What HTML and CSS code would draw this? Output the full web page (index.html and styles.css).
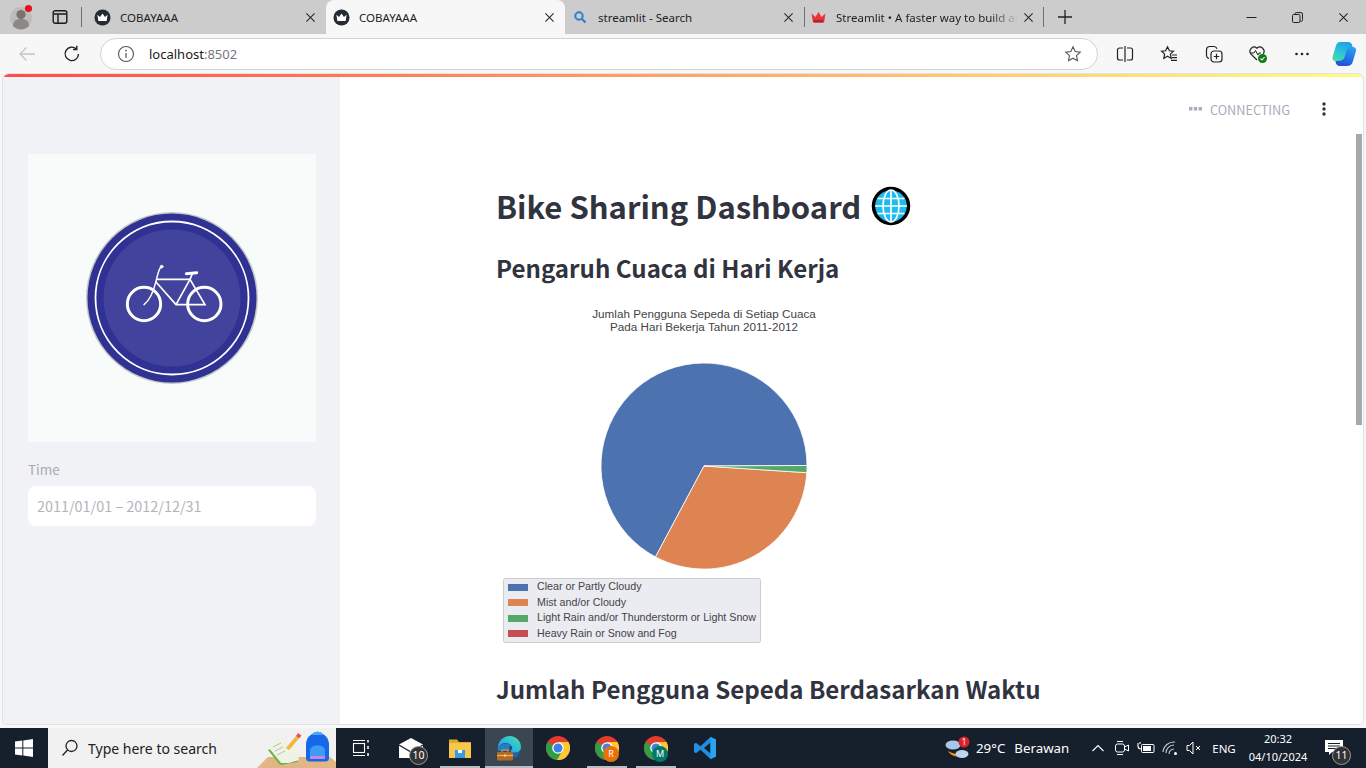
FILE: index.html
```html
<!DOCTYPE html>
<html lang="en">
<head>
<meta charset="utf-8">
<title>COBAYAAA</title>
<link rel="stylesheet" href="styles.css">
</head>
<body>
<svg class="defs" width="0" height="0" aria-hidden="true">
  <symbol id="crown" viewBox="0 0 18 18">
    <circle cx="9" cy="9" r="8.500" fill="#262a36"/>
    <path d="M3.600 6.200 6.400 8.400 9 4.800l2.600 3.600 2.800-2.200-1 6.400H4.600z" fill="#fff"/>
  </symbol>
  <symbol id="chrome" viewBox="0 0 24 24">
    <circle cx="12" cy="12" r="12" fill="#e33b2e"/>
    <path d="M12 12 1.600 6A12 12 0 0 0 11 24l7-10z" fill="#2f9e44"/>
    <path d="M12 6h10.400A12 12 0 0 1 11 24l7-12z" fill="#fcc934"/>
    <circle cx="12" cy="12" r="5.800" fill="#fff"/>
    <circle cx="12" cy="12" r="4.500" fill="#3b82e6"/>
  </symbol>
  <symbol id="close" viewBox="0 0 12 12">
    <path d="M1.500 1.500l9 9M10.500 1.500l-9 9" stroke="#222" stroke-width="1.100" fill="none"/>
  </symbol>
</svg>

<div class="tabstrip">
  <div class="profile">
    <svg width="26" height="26" viewBox="0 0 26 26">
      <circle cx="12" cy="14" r="11" fill="#bdbcb9"/>
      <circle cx="12" cy="10.500" r="4.600" fill="#77746f"/>
      <path d="M4 22c0-6 4-7 8-7s8 1 8 7a11 11 0 0 1-16 0z" fill="#8c8985"/>
      <circle cx="19.500" cy="4.500" r="3.600" fill="#e81123"/>
    </svg>
  </div>
  <div class="side-btn">
    <svg width="16" height="16" viewBox="0 0 16 16"><rect x="1.200" y="1.700" width="13.600" height="12.600" rx="2" fill="none" stroke="#1a1a1a" stroke-width="1.400"/><path d="M2 5h12M6 5v9" stroke="#1a1a1a" stroke-width="1.400" fill="none"/></svg>
  </div>
  <span class="sep first"></span>
  <div class="tab">
    <svg class="fav" width="17" height="17"><use href="#crown"/></svg>
    <span class="tab-title">COBAYAAA</span>
    <svg class="x" width="11" height="11"><use href="#close"/></svg>
  </div>
  <div class="tab active">
    <svg class="fav" width="17" height="17"><use href="#crown"/></svg>
    <span class="tab-title">COBAYAAA</span>
    <svg class="x" width="11" height="11"><use href="#close"/></svg>
  </div>
  <div class="tab">
    <svg class="fav" width="17" height="17" viewBox="0 0 17 17"><circle cx="7" cy="7" r="3.700" fill="none" stroke="#2f7fd1" stroke-width="2"/><path d="M10 10l3.500 3.500" stroke="#2f7fd1" stroke-width="2.200"/></svg>
    <span class="tab-title">streamlit - Search</span>
    <svg class="x" width="11" height="11"><use href="#close"/></svg>
  </div>
  <span class="sep"></span>
  <div class="tab narrow">
    <svg class="fav" width="17" height="17" viewBox="0 0 17 17"><path d="M1.500 4.500 5.500 8 8.500 3l3 5 4-3.500-1.500 9H3z" fill="#e8323c"/><path d="M3.500 11h10l-.5 2.500H4z" fill="#b2212c"/></svg>
    <span class="tab-title fade">Streamlit • A faster way to build an</span>
    <svg class="x" width="11" height="11"><use href="#close"/></svg>
  </div>
  <span class="sep"></span>
  <div class="new-tab">
    <svg width="16" height="16" viewBox="0 0 16 16"><path d="M8 1v14M1 8h14" stroke="#222" stroke-width="1.300"/></svg>
  </div>
  <div class="spacer"></div>
  <div class="win"><svg width="11" height="11" viewBox="0 0 11 11"><path d="M.5 5.500h10" stroke="#222"/></svg></div>
  <div class="win"><svg width="11" height="11" viewBox="0 0 11 11"><rect x=".5" y="2.500" width="7.500" height="8" rx="1.200" fill="none" stroke="#222"/><path d="M3 2.500V1.800A1.200 1.200 0 0 1 4.200.6H9a1.500 1.500 0 0 1 1.500 1.500V7.500A1.200 1.200 0 0 1 8 8.500" fill="none" stroke="#222"/></svg></div>
  <div class="win"><svg width="11" height="11"><use href="#close"/></svg></div>
</div>

<div class="toolbar">
  <div class="tool first">
    <svg width="18" height="18" viewBox="0 0 18 18"><path d="M17 9H2M8.500 2.500 2 9l6.500 6.500" fill="none" stroke="#c4c4c4" stroke-width="1.300"/></svg>
  </div>
  <div class="tool back-gap">
    <svg width="18" height="18" viewBox="0 0 18 18"><path d="M15.500 9A6.700 6.700 0 1 1 13.300 3.900" fill="none" stroke="#222" stroke-width="1.400"/><path d="M13.800 .8v3.700h-3.700" fill="none" stroke="#222" stroke-width="1.400"/></svg>
  </div>
  <div class="address">
    <svg class="info" width="18" height="18" viewBox="0 0 18 18"><circle cx="9" cy="9" r="7.500" fill="none" stroke="#555" stroke-width="1.100"/><path d="M9 8v5" stroke="#555" stroke-width="1.200"/><circle cx="9" cy="5.600" r=".9" fill="#555"/></svg>
    <span class="url">localhost<span class="port">:8502</span></span>
    <div class="spacer"></div>
    <svg class="star" width="18" height="18" viewBox="0 0 18 18"><path d="M9 1.800l2.200 4.700 5.100.6-3.800 3.500 1 5.100L9 13.200l-4.500 2.500 1-5.100L1.700 7.100l5.100-.6z" fill="none" stroke="#555" stroke-width="1.100"/></svg>
  </div>
  <div class="tools-right">
    <div class="tool wide"><svg width="18" height="18" viewBox="0 0 18 18"><path d="M9 1v16" stroke="#222" stroke-width="1.200"/><path d="M7 3H3.500a2 2 0 0 0-2 2v8a2 2 0 0 0 2 2H7M11 3h3.500a2 2 0 0 1 2 2v8a2 2 0 0 1-2 2H11" fill="none" stroke="#222" stroke-width="1.200"/></svg></div>
    <div class="tool wide"><svg width="18" height="18" viewBox="0 0 18 18"><path d="M7.500 1.800l1.900 4 4 .5-3 2.800.8 4.300-3.700-2.100-3.700 2.100.8-4.300-3-2.800 4-.5z" fill="none" stroke="#222" stroke-width="1.200"/><path d="M12 10h5M12 12.700h5M11 15.400h6" stroke="#222" stroke-width="1.200"/></svg></div>
    <div class="tool wide"><svg width="18" height="18" viewBox="0 0 18 18"><rect x="6" y="6" width="11" height="11" rx="3" fill="none" stroke="#222" stroke-width="1.200"/><path d="M11.500 8.800v5.400M8.800 11.500h5.400" stroke="#222" stroke-width="1.200"/><path d="M4 13.500c-1.500-.6-2.500-1.500-2.500-3V5C1.500 3 3 1.500 5 1.500h4c1.500 0 2.500.8 3 2.200" fill="none" stroke="#222" stroke-width="1.200"/></svg></div>
    <div class="tool wide"><svg width="20" height="20" viewBox="0 0 20 20"><path d="M9 16 2.800 9.800A4.200 4.200 0 0 1 9 4.200a4.200 4.200 0 0 1 6.200 5.600" fill="none" stroke="#222" stroke-width="1.200"/><path d="M2.500 9h3.500l1.500-2.500L10 11l1-2h2" fill="none" stroke="#222" stroke-width="1"/><circle cx="14.500" cy="14.500" r="4.500" fill="#107c10"/><path d="M12.500 14.500l1.500 1.500 2.500-3" fill="none" stroke="#fff" stroke-width="1.100"/></svg></div>
    <div class="tool wide"><svg width="16" height="4" viewBox="0 0 16 4"><circle cx="2.500" cy="2" r="1.300" fill="#222"/><circle cx="8" cy="2" r="1.300" fill="#222"/><circle cx="13.500" cy="2" r="1.300" fill="#222"/></svg></div>
    <div class="tool last"><svg width="24" height="26" viewBox="0 0 24 26">
      <defs>
        <linearGradient id="cpa" x1="0.700" y1="0" x2="0.300" y2="1"><stop offset="0" stop-color="#1f9fe8"/><stop offset=".6" stop-color="#2fc6d6"/><stop offset="1" stop-color="#43dca0"/></linearGradient>
        <linearGradient id="cpb" x1="0.700" y1="0" x2="0.300" y2="1"><stop offset="0" stop-color="#2aa0f0"/><stop offset=".6" stop-color="#1f6fe6"/><stop offset="1" stop-color="#2a4fd0"/></linearGradient>
      </defs>
      <path d="M8 1h8c2.500 0 3.800 1.500 4.300 3.500L21 7h-1.500c-2 0-3 1-3.500 3l-2 7.500c-.6 1.800-2 2.500-4 2.500H3.500C1 20 0 18 .6 16L4 4.500C4.700 2.300 6 1 8 1z" fill="url(#cpa)"/>
      <path d="M15 25H8c-2.500 0-3.800-1.500-4.300-3.500L3.500 20H6c3.500 0 5.500-1 6.500-3.500l2-7C15 7.500 16.500 6 18.500 6H21c2.300 0 3.600 2 3 4l-3.500 11.500C19.800 23.700 18 25 15 25z" fill="url(#cpb)"/>
    </svg></div>
  </div>
</div>

<div class="window">
  <div class="app">
    <div class="decoration"></div>
    <div class="app-body">
      <aside class="sidebar">
        <div class="logo">
          <svg width="288" height="288" viewBox="0 0 288 288">
            <circle cx="144" cy="144" r="86" fill="#c4c6c8"/>
            <circle cx="144" cy="144" r="84.500" fill="#2f3193"/>
            <circle cx="144" cy="144" r="76.500" fill="none" stroke="#fff" stroke-width="1.800"/>
            <circle cx="144" cy="144" r="68.500" fill="#42439c"/>
            <g transform="translate(42 46) scale(.3333)" fill="none" stroke="#fff" stroke-linecap="round">
              <circle cx="222" cy="312" r="50" stroke-width="9"/>
              <circle cx="403" cy="312" r="50" stroke-width="9"/>
              <path d="M274 200c-8 5-10 22-16 44-7 28-18 56-36 70" stroke-width="4.500"/>
              <path d="M262 238h98M258 246l60 68h87l-45-76-42 76" stroke-width="5"/>
              <path d="M349 221l31-3" stroke-width="9"/>
              <path d="M366 224l-6 14" stroke-width="5"/>
              <circle cx="275" cy="200" r="4" fill="#fff" stroke-width="3"/>
            </g>
          </svg>
        </div>
        <label class="field-label">Time</label>
        <div class="date-input">2011/01/01 – 2012/12/31</div>
      </aside>
      <main class="main">
        <div class="status">
          <svg width="13" height="4" viewBox="0 0 13 4"><path d="M0 0h3.400v3.400H0zM4.800 0h3.400v3.400H4.800zM9.600 0H13v3.400H9.600z" fill="#a6adbb"/></svg>
          <span class="status-text">CONNECTING</span>
          <svg class="kebab" width="4" height="14" viewBox="0 0 4 14"><circle cx="2" cy="2" r="1.700" fill="#31333f"/><circle cx="2" cy="7" r="1.700" fill="#31333f"/><circle cx="2" cy="12" r="1.700" fill="#31333f"/></svg>
        </div>
        <div class="scrollbar"></div>
        <h1 class="title">Bike Sharing Dashboard
          <svg class="globe" width="40" height="40" viewBox="0 0 40 40">
            <circle cx="20" cy="20" r="17.500" fill="#1cbcf0" stroke="#000" stroke-width="3.500"/>
            <g fill="none" stroke="#fff" stroke-width="1.700">
              <ellipse cx="20" cy="20" rx="8" ry="16"/>
              <path d="M20 4v32M4 20h32M6.500 12.500h27M6.500 27.500h27"/>
            </g>
          </svg>
        </h1>
        <h2 class="section first-section">Pengaruh Cuaca di Hari Kerja</h2>
        <svg class="chart" width="340" height="350" viewBox="0 0 340 350">
          <text class="chart-title" x="208" y="13">Jumlah Pengguna Sepeda di Setiap Cuaca</text>
          <text class="chart-title" x="208" y="26">Pada Hari Bekerja Tahun 2011-2012</text>
          <g stroke="#fff" stroke-width=".8" stroke-linejoin="round">
            <path d="M208 161 159.500 251.900A103 103 0 1 1 311 160.500z" fill="#4c72b0"/>
            <path d="M208 161 310.800 167.700A103 103 0 0 1 159.500 251.900z" fill="#dd8452"/>
            <path d="M208 161 311 160.500A103 103 0 0 1 310.800 167.700z" fill="#55a868"/>
          </g>
          <rect x="7.500" y="273.500" width="257" height="64" rx="2" fill="#ebebf2" stroke="#ccc"/>
          <rect x="12" y="279" width="20" height="7" fill="#4c72b0"/>
          <rect x="12" y="294" width="20" height="7" fill="#dd8452"/>
          <rect x="12" y="310" width="20" height="7" fill="#55a868"/>
          <rect x="12" y="325" width="20" height="7" fill="#c44e52"/>
          <text class="legend" x="41" y="285">Clear or Partly Cloudy</text>
          <text class="legend" x="41" y="300.500">Mist and/or Cloudy</text>
          <text class="legend" x="41" y="316">Light Rain and/or Thunderstorm or Light Snow</text>
          <text class="legend" x="41" y="331.500">Heavy Rain or Snow and Fog</text>
        </svg>
        <h2 class="section">Jumlah Pengguna Sepeda Berdasarkan Waktu</h2>
      </main>
    </div>
  </div>
</div>

<footer class="taskbar">
  <div class="start">
    <svg width="18" height="18" viewBox="0 0 18 18"><path d="M0 2.600 7.300 1.600v7H0zM8.300 1.400 18 0v8.600H8.300zM0 9.600h7.300v7L0 15.500zM8.300 9.600H18V18l-9.700-1.400z" fill="#fff"/></svg>
  </div>
  <div class="search">
    <svg class="lens" width="18" height="18" viewBox="0 0 18 18"><circle cx="10.500" cy="7" r="5.500" fill="none" stroke="#222" stroke-width="1.300"/><path d="M6.500 11 1.500 16.500" stroke="#222" stroke-width="1.300"/></svg>
    <span class="search-text">Type here to search</span>
    <svg class="search-art" width="80" height="40" viewBox="0 0 80 40">
      <path d="M1 40 12 29h62l6 5v6z" fill="#e0b684"/>
      <path d="M12 22 31 15l11 19-18 3z" fill="#6fae4e"/>
      <path d="M13 20 24 11l8 4 7-2 4 19-10 3-8 0z" fill="#eef3e4"/>
      <path d="M17 19l8-4M19 23l8-4M21 27l8-4" stroke="#b9c2ae" stroke-width="1"/>
      <path d="M30 20 40 8l3 2.500L33 22z" fill="#f2b53f"/>
      <path d="M40 8l2-3 3.500 2.500-2.500 3z" fill="#e8574c"/>
      <path d="M50 30V17c0-7 4-11 11.500-13.500C69 6 73 10 73 17v13c0 2.500-1.500 3.500-3.500 3.500h-16C51.500 33.500 50 32.500 50 30z" fill="#1668e8"/>
      <path d="M54 31v-8c0-3.500 3-5.500 7.500-5.500S69 19.500 69 23v8z" fill="#3f9cf4"/>
      <path d="M54 28h15v3H54z" fill="#c685ea"/>
      <path d="M56 7h11l-2-3h-7z" fill="#4aa8f8"/>
    </svg>
  </div>
  <div class="app-cell">
    <svg width="18" height="18" viewBox="0 0 18 18"><path d="M1 1.500h12M1 16.500h12" stroke="#fff" stroke-width="1.100"/><rect x="1.500" y="4.500" width="11" height="9" fill="none" stroke="#fff" stroke-width="1.100"/><path d="M16 1v2.500M16 7v3M16 14v3" stroke="#fff" stroke-width="1.500"/></svg>
  </div>
  <div class="app-cell mail">
    <svg width="24" height="20" viewBox="0 0 24 20"><path d="M0 6.500 12 0l12 6.500V20H0z" fill="#fff"/><path d="M0 7l12 7 12-7" fill="none" stroke="#1a2330" stroke-width="1.300"/></svg>
    <span class="count">10</span>
  </div>
  <div class="app-cell open">
    <svg width="24" height="22" viewBox="0 0 24 22"><path d="M1 2.500h8l2 2.500h12v3H1z" fill="#e0a82e"/><path d="M1 6h22v15H1z" fill="#f5c84c"/><path d="M7 13h10v8H7z" fill="#3b9ae1"/><path d="M10 13h4v3h-4z" fill="#fff"/></svg>
  </div>
  <div class="app-cell current">
    <svg width="26" height="26" viewBox="0 0 26 26">
      <defs><linearGradient id="edg" x1="0" y1="1" x2="1" y2="0"><stop offset="0" stop-color="#2a8fe0"/><stop offset=".6" stop-color="#2fc4d8"/><stop offset="1" stop-color="#5fdc8a"/></linearGradient></defs>
      <path d="M2 13C2 6 7 1 14 1c6 0 11 5 11 11 0 3.500-2.500 5.500-6 5.500-2 0-4-.5-4.500-1.500 1.500-1 2-2.500 1.500-4-1-2.500-3.500-4-6.500-4C6 8 3.500 10 2 13z" fill="url(#edg)"/>
      <path d="M24.500 15c-1 2-3 3.200-5.500 3.200-2 0-3.500-.4-5-1.200.5 3 2.500 5.500 5.500 5.500 2.500-1.500 4.200-4.200 5-7.500z" fill="#1668b8"/>
      <path d="M2 13c-.3 1.500-.2 2.500 0 3h12c-1-2-1-5 1-6-4-3-11-1-13 3z" fill="#1a80d0"/>
      <rect x="1" y="17" width="16" height="8.500" rx="1" fill="#b06a26"/>
      <path d="M6 17v-2h6v2" fill="none" stroke="#c98a3a" stroke-width="1.300"/>
      <path d="M1 20.500h16" stroke="#e7b35b" stroke-width="1.300"/>
      <rect x="8" y="19.500" width="2" height="2" fill="#f6d98e"/>
    </svg>
  </div>
  <div class="app-cell">
    <svg width="24" height="24"><use href="#chrome"/></svg>
  </div>
  <div class="app-cell open">
    <svg width="24" height="24"><use href="#chrome"/></svg>
    <span class="avatar r">R</span>
  </div>
  <div class="app-cell open">
    <svg width="24" height="24"><use href="#chrome"/></svg>
    <span class="avatar m">M</span>
  </div>
  <div class="app-cell">
    <svg width="24" height="24" viewBox="0 0 24 24"><path d="M17.500 1 23 3.500v17L17.500 23 7.500 13.700 3 17.200 1 16V8l2-1.200 4.500 3.500z" fill="#1f8fe0"/><path d="M17.500 6.500 11 12l6.500 5.500z" fill="#16202c"/><path d="M17.500 1 23 3.500v17L17.500 23z" fill="#2aa3f0"/></svg>
  </div>
  <div class="spacer"></div>
  <div class="weather">
    <svg width="28" height="28" viewBox="0 0 28 28">
      <path d="M4 17a11 9 0 0 0 19 2c-4 2-12 2-19-2z" fill="#f09020"/>
      <ellipse cx="9" cy="11" rx="7.500" ry="4.500" fill="#a9c8e8"/>
      <ellipse cx="18" cy="20" rx="6.500" ry="4" fill="#bcd6ee"/>
      <circle cx="20" cy="8" r="5.500" fill="#d9222a"/>
      <text class="weather-badge" x="20" y="11">1</text>
    </svg>
    <span class="temp">29°C</span>
    <span class="cond">Berawan</span>
  </div>
  <div class="tray caret"><svg width="14" height="8" viewBox="0 0 14 8"><path d="M1.500 7 7 1.500 12.500 7" fill="none" stroke="#fff" stroke-width="1.100"/></svg></div>
  <div class="tray"><svg width="16" height="18" viewBox="0 0 16 18"><rect x="1.500" y="5" width="9" height="8" rx="2" fill="none" stroke="#fff"/><path d="M10.500 8l4-2v6l-4-2z" fill="none" stroke="#fff"/><path d="M3 2.500h6M3 15.500h6" stroke="#fff"/></svg></div>
  <div class="tray"><svg width="18" height="12" viewBox="0 0 18 12"><rect x="4.500" y="2.500" width="12.500" height="8" rx="1" fill="none" stroke="#fff"/><rect x="6" y="4" width="8" height="5" fill="#fff"/><path d="M1 1v3c0 2 1 3 3 3M3 0v2" fill="none" stroke="#fff" stroke-width="1.100"/></svg></div>
  <div class="tray"><svg width="16" height="14" viewBox="0 0 16 14"><g fill="none" stroke="#c8ccd2" stroke-width="1.100"><path d="M1 11A11 11 0 0 1 13 1"/><path d="M4 12a8 8 0 0 1 8-8"/><path d="M7 13a5 5 0 0 1 5-5"/></g><circle cx="13.500" cy="12.500" r="1.500" fill="#fff"/></svg></div>
  <div class="tray"><svg width="16" height="14" viewBox="0 0 16 14"><path d="M1 4.500h2.500L7 1v12L3.500 9.500H1z" fill="none" stroke="#fff"/><path d="M10 5l4 4M14 5l-4 4" stroke="#fff"/></svg></div>
  <div class="tray lang">ENG</div>
  <div class="clock"><span>20:32</span><span>04/10/2024</span></div>
  <div class="notify">
    <svg width="18" height="16" viewBox="0 0 18 16"><path d="M0 0h18v12H7l-3 3v-3H0z" fill="#fff"/><path d="M3 3.500h12M3 6h12M3 8.500h8" stroke="#16202c" stroke-width="1"/></svg>
    <span class="count">11</span>
  </div>
</footer>
</body>
</html>
```

FILE: styles.css
```css
* { box-sizing: border-box; }
html, body { margin: 0; padding: 0; }
body {
  width: 1366px;
  height: 768px;
  overflow: hidden;
  display: flex;
  flex-direction: column;
  background: #f7f7f7;
  font-family: "Noto Sans", "Open Sans", sans-serif;
  color: #222;
}
.defs { position: absolute; }
.spacer { flex: 1; }

/* Tab strip */
.tabstrip { height: 34px; background: #cccccc; display: flex; align-items: center; flex: none; }
.profile { width: 44px; height: 34px; display: flex; align-items: center; justify-content: center; }
.side-btn { width: 32px; height: 34px; display: flex; align-items: center; justify-content: center; }
.sep { width: 1px; height: 20px; background: #6f6f6f; flex: none; }
.sep.first { margin-left: 5px; margin-right: 5px; }
.tab { width: 239px; height: 34px; display: flex; align-items: center; padding-left: 7px; flex: none; }
.tab.narrow { width: 238px; padding-left: 5px; }
.tab.active { background: #f7f7f7; border-radius: 8px 8px 0 0; }
.tab .fav { flex: none; }
.tab-title { font-size: 11.500px; margin-left: 9px; width: 182px; white-space: nowrap; overflow: hidden; flex: none; color: #222; }
.tab-title.fade { -webkit-mask-image: linear-gradient(90deg, #000 85%, transparent); mask-image: linear-gradient(90deg, #000 85%, transparent); }
.tab .x { margin-left: 3px; flex: none; }
.tab.narrow .x { margin-left: 5px; }
.new-tab { width: 42px; display: flex; align-items: center; justify-content: center; }
.win { width: 46px; height: 34px; display: flex; align-items: center; justify-content: center; }

/* Toolbar */
.toolbar { height: 40px; flex: none; background: #f7f7f7; display: flex; padding-top: 4px; align-items: flex-start; }
.tool { width: 44px; height: 32px; display: flex; align-items: center; justify-content: center; flex: none; }
.tool.first { margin-left: 5px; }
.tool.back-gap { margin-left: 1px; }
.tool.wide { width: 44.300px; }
.tool.last { width: 40px; }
.address { width: 998px; height: 32px; margin-left: 6px; background: #fff; border: 1px solid #d4d4d4; border-radius: 16px; display: flex; align-items: center; padding: 0 15px 0 16px; flex: none; }
.url { margin-left: 14px; font-size: 13px; color: #1a1a1a; }
.port { color: #77777a; }
.tools-right { display: flex; margin-left: 5px; }

/* Page */
.window { height: 654px; flex: none; padding: 0 3px 4px; }
.app { height: 650px; display: flex; flex-direction: column; overflow: hidden; border-radius: 6px 6px 4px 4px; background: #fff; box-shadow: 0 0 0 1px #e2e2e2; }
.decoration { height: 3px; flex: none; background: linear-gradient(90deg, #ff4b4b, #fffd80); }
.app-body { flex: 1; display: flex; min-height: 0; }
.sidebar { width: 337px; flex: none; background: #f0f2f6; padding: 77px 24px 0 25px; font-family: "Noto Sans CJK SC", "Open Sans", sans-serif; }
.logo { width: 288px; height: 288px; background: #f7fbfa; }
.logo svg { display: block; }
.field-label { display: block; margin-top: 17px; font-size: 13.500px; line-height: 20px; color: #a8aab3; }
.date-input { margin-top: 7px; width: 288px; height: 40px; background: #fff; border-radius: 8px; padding-left: 9px; font-size: 14.400px; line-height: 40px; color: #b2b4ba; }
.main { flex: 1; position: relative; padding: 107px 0 0 156px; font-family: "Noto Sans CJK SC", "Open Sans", sans-serif; color: #31333f; overflow: hidden; }
.status { position: absolute; top: 24px; right: 37px; height: 16px; display: flex; align-items: center; }
.status-text { margin-left: 8px; font-size: 12.700px; color: #a6adbb; }
.kebab { margin-left: 32px; }
.scrollbar { position: absolute; top: 57px; right: 1px; width: 6px; height: 291px; background: #a9a9ad; }
.title { margin: 0; font-size: 31px; line-height: 44px; font-weight: 700; display: flex; align-items: center; gap: 10px; white-space: nowrap; }
.globe { flex: none; }
.section { margin: 0; font-size: 24.100px; line-height: 36px; font-weight: 700; white-space: nowrap; }
.first-section { margin-top: 22px; }
.chart { display: block; margin-top: 19px; margin-bottom: 16px; }
.chart-title { font-family: "Liberation Sans", Arial, sans-serif; font-size: 11.700px; fill: #444; text-anchor: middle; }
.legend { font-family: "Liberation Sans", Arial, sans-serif; font-size: 10.700px; fill: #444; }
.weather-badge { font-size: 8px; fill: #fff; text-anchor: middle; }

/* Taskbar */
.taskbar { height: 40px; flex: none; background: #16202c; display: flex; align-items: stretch; color: #fff; }
.start { width: 48px; display: flex; align-items: center; justify-content: center; flex: none; }
.search { width: 288px; flex: none; background: #f1f1f1; display: flex; align-items: center; padding-left: 13px; overflow: hidden; }
.search-text { margin-left: 9px; font-size: 14px; color: #222; }
.lens { flex: none; }
.search-art { margin-left: auto; flex: none; }
.app-cell { width: 49px; flex: none; display: flex; align-items: center; justify-content: center; position: relative; }
.app-cell.mail { margin-left: 1px; }
.app-cell.open::after { content: ""; position: absolute; left: 5px; right: 4px; bottom: 0; height: 2px; background: #b9bcc0; }
.app-cell.current { background: #3b4653; margin-left: 1px; width: 48px; }
.app-cell.current::after { content: ""; position: absolute; left: 0; right: 0; bottom: 0; height: 2px; background: #b9bcc0; }
.count { position: absolute; width: 19px; height: 19px; border-radius: 50%; background: #333; border: 1.500px solid #999; font-size: 10.500px; line-height: 16px; text-align: center; color: #fff; }
.mail .count { right: 7px; bottom: 3px; }
.avatar { position: absolute; right: 12px; bottom: 6px; width: 16px; height: 16px; border-radius: 50%; font-size: 9px; line-height: 16px; text-align: center; color: #fff; }
.avatar.r { background: #e8710a; }
.avatar.m { background: #00796b; }
.weather { width: 146px; flex: none; display: flex; align-items: center; font-size: 13.300px; padding-left: 4px; }
.temp { margin-left: 4px; }
.cond { margin-left: 9px; }
.tray { width: 24px; flex: none; display: flex; align-items: center; justify-content: center; }
.tray.lang { width: 36px; font-size: 11.500px; }
.clock { width: 72px; flex: none; display: flex; flex-direction: column; align-items: center; justify-content: center; font-size: 11px; line-height: 18px; }
.notify { width: 52px; padding-right: 12px; flex: none; display: flex; align-items: center; justify-content: center; position: relative; }
.notify .count { right: 15px; bottom: 3px; }
```
